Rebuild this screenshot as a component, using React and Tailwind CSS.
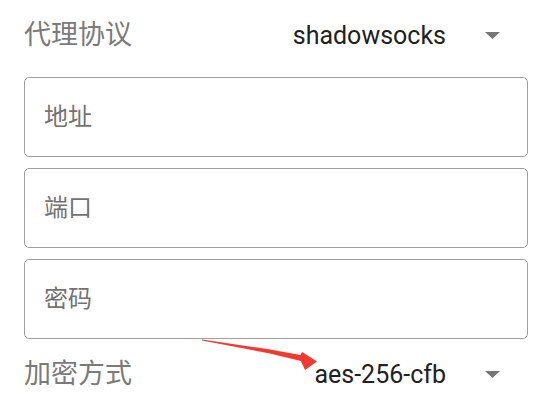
const cjk = { fontFamily: 'Roboto, "Noto Sans CJK SC", sans-serif' };

const Caret = () => (
  <svg width="15" height="7" viewBox="0 0 15 7" className="shrink-0">
    <path d="M0 0h15L7.5 7z" fill="#757575" />
  </svg>
);

const SelectRow = ({ label, value }) => (
  <div className="flex h-[70px] items-center justify-between">
    <span className="text-[27px] leading-none text-[#7a7a7a]">{label}</span>
    <div className="flex items-center">
      <span className="text-[25px] leading-none text-[#212121]">{value}</span>
      <span className="ml-[39px] mr-[28px] flex items-center pt-[1px]">
        <Caret />
      </span>
    </div>
  </div>
);

const Field = ({ placeholder }) => (
  <div className="flex h-[80px] items-center rounded-[5px] border border-[#a0a0a0] pl-[19px]">
    <span className="text-[24px] leading-none text-[#727272]">{placeholder}</span>
  </div>
);

export default function App() {
  return (
    <div className="relative h-[409px] w-[544px] overflow-hidden bg-white pl-[24px] pr-[16px]" style={cjk}>
      <SelectRow label="代理协议" value="shadowsocks" />
      <div className="mt-[7px] flex flex-col gap-[11px]">
        <Field placeholder="地址" />
        <Field placeholder="端口" />
        <Field placeholder="密码" />
      </div>
      <SelectRow label="加密方式" value="aes-256-cfb" />

      <svg className="pointer-events-none absolute left-0 top-0" width="544" height="409">
        <polygon
          points="202,339.4 270,349.5 300.5,355 302,352 317,361.5 305,370 301,361 270,353.5 202,340.6"
          fill="#f4372f"
        />
      </svg>
    </div>
  );
}
